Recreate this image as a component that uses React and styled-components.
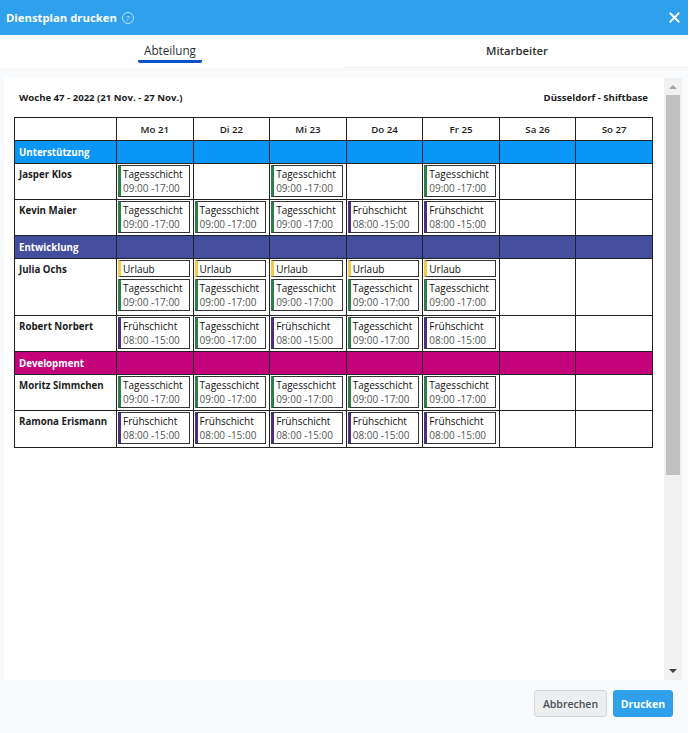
import React from "react";
import styled, { createGlobalStyle } from "styled-components";
import { X } from "lucide-react";

const GlobalStyle = createGlobalStyle`
    html, body {
        margin: 0;
        padding: 0;
        background: #f9fafc;
    }
    body {
        font-family: "Open Sans", "Liberation Sans", sans-serif;
    }
`;

const TAG = { kind: "Tagesschicht", time: "09:00 -17:00", color: "#2e7d4a" };
const FRUH = { kind: "Frühschicht", time: "08:00 -15:00", color: "#4b2e7d" };
const URLAUB = { kind: "Urlaub", color: "#f2c94c" };

const days = ["Mo 21", "Di 22", "Mi 23", "Do 24", "Fr 25", "Sa 26", "So 27"];

const groups = [
    {
        name: "Unterstützung",
        color: "#0a96f7",
        rows: [
            { name: "Jasper Klos", height: 36, shifts: [[TAG], [], [TAG], [], [TAG], [], []] },
            { name: "Kevin Maier", height: 36, shifts: [[TAG], [TAG], [TAG], [FRUH], [FRUH], [], []] },
        ],
    },
    {
        name: "Entwicklung",
        color: "#434f9e",
        rows: [
            {
                name: "Julia Ochs",
                height: 57,
                shifts: [[URLAUB, TAG], [URLAUB, TAG], [URLAUB, TAG], [URLAUB, TAG], [URLAUB, TAG], [], []],
            },
            { name: "Robert Norbert", height: 36, shifts: [[FRUH], [TAG], [FRUH], [TAG], [FRUH], [], []] },
        ],
    },
    {
        name: "Development",
        color: "#c4037b",
        rows: [
            { name: "Moritz Simmchen", height: 36, shifts: [[TAG], [TAG], [TAG], [TAG], [TAG], [], []] },
            { name: "Ramona Erismann", height: 37, shifts: [[FRUH], [FRUH], [FRUH], [FRUH], [FRUH], [], []] },
        ],
    },
];

const App = () => {
    return (
        <Page>
            <GlobalStyle />
            <Header>
                <Title>
                    Dienstplan drucken
                    <Help>?</Help>
                </Title>
                <X size={17} strokeWidth={2.5} color="#fff" />
            </Header>

            <Tabs>
                <Tab active>
                    <span>Abteilung</span>
                </Tab>
                <Tab>
                    <span>Mitarbeiter</span>
                </Tab>
            </Tabs>

            <Body>
                <Panel>
                    <TopLine>
                        <span>Woche 47 - 2022 (21 Nov. - 27 Nov.)</span>
                        <span>Düsseldorf - Shiftbase</span>
                    </TopLine>
                    <Table>
                        <colgroup>
                            <col style={{ width: 102 }} />
                            {days.map((d) => (
                                <col key={d} />
                            ))}
                        </colgroup>
                        <thead>
                            <tr>
                                <DayHead />
                                {days.map((d) => (
                                    <DayHead key={d}>{d}</DayHead>
                                ))}
                            </tr>
                        </thead>
                        <tbody>
                            {groups.map((g) => (
                                <React.Fragment key={g.name}>
                                    <tr>
                                        <GroupCell color={g.color} $name>
                                            {g.name}
                                        </GroupCell>
                                        {days.map((d) => (
                                            <GroupCell key={d} color={g.color} />
                                        ))}
                                    </tr>
                                    {g.rows.map((r) => (
                                        <Row key={r.name} $height={r.height}>
                                            <NameCell>{r.name}</NameCell>
                                            {r.shifts.map((list, i) => (
                                                <ShiftCell key={i}>
                                                    {list.map((s) => (
                                                        <Shift key={s.kind} color={s.color} $compact={!s.time}>
                                                            <div>{s.kind}</div>
                                                            {s.time && <Time>{s.time}</Time>}
                                                        </Shift>
                                                    ))}
                                                </ShiftCell>
                                            ))}
                                        </Row>
                                    ))}
                                </React.Fragment>
                            ))}
                        </tbody>
                    </Table>
                </Panel>
                <Scrollbar>
                    <ArrowUp />
                    <Thumb />
                    <ArrowDown />
                </Scrollbar>
            </Body>

            <Footer>
                <CancelButton>Abbrechen</CancelButton>
                <PrintButton>Drucken</PrintButton>
            </Footer>
        </Page>
    );
};

const Page = styled.div`
    width: 688px;
    height: 733px;
    display: flex;
    flex-direction: column;
    overflow: hidden;
    background: #f9fafc;
`;

const Header = styled.div`
    height: 35px;
    flex: none;
    background: #2fa1ec;
    display: flex;
    align-items: center;
    justify-content: space-between;
    padding: 0 5px 0 6px;
`;

const Title = styled.div`
    display: flex;
    align-items: center;
    gap: 5px;
    color: #fff;
    font-size: 11.3px;
    font-weight: 700;
`;

const Help = styled.span`
    width: 10px;
    height: 10px;
    border: 1px solid #bfe2fa;
    border-radius: 50%;
    color: #bfe2fa;
    font-size: 8px;
    font-weight: 400;
    line-height: 10px;
    text-align: center;
`;

const Tabs = styled.div`
    height: 33px;
    flex: none;
    display: flex;
`;

const Tab = styled.div`
    width: 344px;
    background: #fff;
    display: flex;
    justify-content: center;
    box-sizing: border-box;
    color: #2b2f33;
    font-size: ${(p) => (p.active ? "11.7px" : "11.3px")};
    font-weight: ${(p) => (p.active ? 400 : 600)};
    padding-top: 8px;
    padding-right: ${(p) => (p.active ? "4px" : "0")};
    padding-left: ${(p) => (p.active ? "0" : "2px")};
    border-bottom: ${(p) => (p.active ? "none" : "1px solid #eef0f4")};

    span {
        height: 17px;
        line-height: 15px;
        padding: 0 6px;
        border-bottom: ${(p) => (p.active ? "3px solid #0f4fc4" : "none")};
        border-radius: 2px;
    }
`;

const Body = styled.div`
    height: 602px;
    flex: none;
    margin-top: 10px;
    padding: 0 6px 0 4px;
    display: flex;
`;

const Panel = styled.div`
    width: 660px;
    background: #fff;
    box-sizing: border-box;
    padding: 13px 11px 0 10px;
`;

const TopLine = styled.div`
    display: flex;
    justify-content: space-between;
    padding: 0 5px;
    height: 26px;
    line-height: 13px;
    font-size: 9.6px;
    font-weight: 700;
    color: #1c1c1c;
`;

const Table = styled.table`
    width: 639px;
    table-layout: fixed;
    border-collapse: collapse;
    font-size: 9.7px;
    color: #1c1c1c;

    td,
    th {
        border: 1px solid #222;
        padding: 0;
    }
`;

const DayHead = styled.th`
    height: 22px;
    font-weight: 600;
    text-align: center;
`;

const GroupCell = styled.td`
    height: 22px;
    background: ${(p) => p.color};
    color: #fff;
    font-weight: 700;
    padding-left: 4px !important;
    border-color: ${(p) => (p.$name ? p.color : "#1a1a3a")};
`;

const Row = styled.tr`
    height: ${(p) => p.$height}px;
`;

const NameCell = styled.td`
    vertical-align: top;
    padding: 4px 0 0 4px !important;
    font-weight: 700;
    line-height: 13px;
`;

const ShiftCell = styled.td`
    vertical-align: top;
    padding: 1px 3px 2px 1px !important;
`;

const Shift = styled.div`
    box-sizing: border-box;
    border: 1.5px solid #333;
    border-left: 3px solid ${(p) => p.color};
    padding: ${(p) => (p.$compact ? "1px 0 0 2px" : "1px 0 1px 2px")};
    font-size: 10px;
    line-height: 14px;
    color: #111;
    margin-bottom: 2px;

    &:last-child {
        margin-bottom: 0;
    }
`;

const Time = styled.div`
    color: #555;
`;

const Scrollbar = styled.div`
    width: 18px;
    background: #f1f1f1;
    display: flex;
    flex-direction: column;
    align-items: center;
`;

const ArrowUp = styled.div`
    margin-top: 7px;
    width: 0;
    height: 0;
    border-left: 4px solid transparent;
    border-right: 4px solid transparent;
    border-bottom: 4px solid #a5a5a5;
`;

const Thumb = styled.div`
    width: 14px;
    height: 380px;
    margin-top: 6px;
    background: #c1c1c1;
`;

const ArrowDown = styled.div`
    margin-top: auto;
    margin-bottom: 7px;
    width: 0;
    height: 0;
    border-left: 4px solid transparent;
    border-right: 4px solid transparent;
    border-top: 4px solid #404040;
`;

const Footer = styled.div`
    flex: 1;
    display: flex;
    justify-content: flex-end;
    align-items: flex-start;
    gap: 6px;
    padding: 10px 15px 0 0;
`;

const CancelButton = styled.button`
    width: 73px;
    height: 27px;
    padding: 0;
    border: 1px solid #d4d7db;
    border-radius: 3px;
    background: #eceef0;
    color: #4a4f55;
    font-family: inherit;
    font-size: 10.5px;
    font-weight: 600;
`;

const PrintButton = styled.button`
    width: 60px;
    height: 27px;
    padding: 0;
    border: 1px solid #2fa1ec;
    border-radius: 3px;
    background: #2fa1ec;
    color: #fff;
    font-family: inherit;
    font-size: 10.5px;
    font-weight: 700;
`;

export default App;
